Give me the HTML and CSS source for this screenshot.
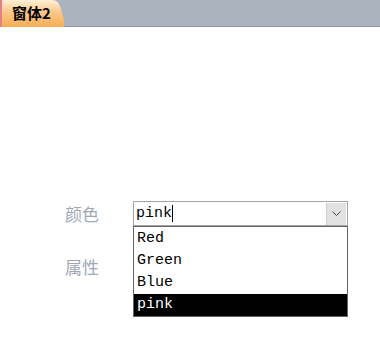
FILE: index.html
```html
<!DOCTYPE html>
<html lang="zh">
<head>
    <meta charset="UTF-8">
    <meta name="viewport" content="width=device-width, initial-scale=1.0">
    <title>窗体2</title>
    <link rel="stylesheet" href="styles.css">
</head>
<body>
    <div class="tabBar">
        <div class="tab">窗体2</div>
    </div>
    <div class="form">
        <div class="row">
            <span class="label">颜色</span>
            <div class="combo">
                <span class="value">pink<i class="caret"></i></span>
                <span class="arrow">
                    <svg width="9" height="6" viewBox="0 0 9 6"><path d="M0.5 0.5 L4.5 4.5 L8.5 0.5" fill="none" stroke="#444" stroke-width="1"/></svg>
                </span>
                <ul class="list">
                    <li>Red</li>
                    <li>Green</li>
                    <li>Blue</li>
                    <li class="selected">pink</li>
                </ul>
            </div>
        </div>
        <div class="row second">
            <span class="label">属性</span>
        </div>
    </div>
</body>
</html>
```

FILE: styles.css
```css
html, body{
    min-height: 100%;
}
body{
    margin: 0;
    min-height: 100vh;
    background: #fff;
    font-family: "Noto Sans CJK SC", sans-serif;
}
.tabBar{
    height: 26px;
    background: #abb3bf;
    border-bottom: 1px solid #8f97a4;
    display: flex;
}
.tab{
    width: 52px;
    padding-left: 10px;
    height: 27px;
    border-left: 2px solid #e3808a;
    background: linear-gradient(#fff0d8, #fbc888 45%, #f8ad55);
    clip-path: path('M0 0 H52 C57 0 59 3 61 9 L66 27 H0 Z');
    font-size: 15px;
    font-weight: bold;
    line-height: 25px;
    color: #000;
}
.form{
    padding: 174px 0 0 65px;
}
.row{
    display: flex;
    align-items: center;
    height: 25px;
}
.row.second{
    margin-top: 28px;
}
.label{
    width: 68px;
    font-size: 17px;
    color: #a0a8b8;
}
.combo{
    position: relative;
    z-index: 1;
    width: 213px;
    height: 23px;
    border: 1px solid #a4a4a4;
    display: flex;
    align-items: center;
    font-family: "Liberation Mono", monospace;
    font-size: 15px;
}
.value{
    flex: 1;
    padding-left: 2px;
    display: flex;
    align-items: center;
    color: #000;
}
.caret{
    display: inline-block;
    width: 1px;
    height: 17px;
    background: #000;
}
.arrow{
    width: 19px;
    height: 22px;
    margin-right: 1px;
    background: #e1e1e1;
    border-left: 1px solid #d0d0d0;
    display: flex;
    align-items: center;
    justify-content: center;
}
.list{
    position: absolute;
    top: 24px;
    left: -1px;
    width: 213px;
    margin: 0;
    padding: 1px 0 0;
    list-style: none;
    border: 1px solid #646464;
    background: #fff;
}
.list li{
    height: 22px;
    line-height: 22px;
    padding-left: 3px;
    color: #000;
}
.list li.selected{
    background: #000;
    color: #fff;
}
```
